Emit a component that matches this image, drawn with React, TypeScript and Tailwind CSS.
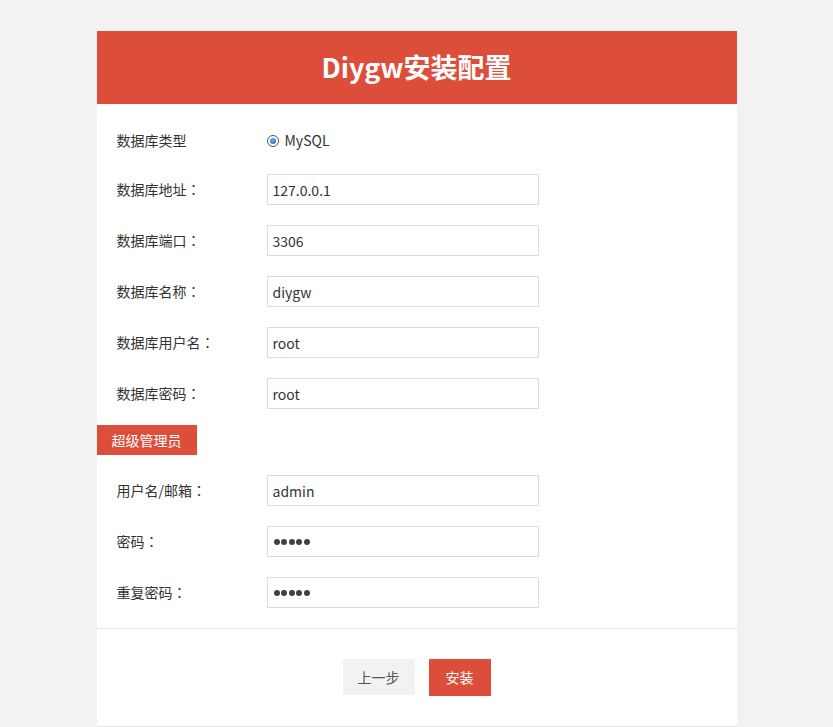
import React from "react";

const font = { fontFamily: '"Noto Sans CJK SC", "Noto Sans", sans-serif' };
const jp = { fontFamily: '"Noto Sans CJK JP", sans-serif' };

function Label({ text }: { text: string }) {
  const hasColon = text.endsWith("：");
  const base = hasColon ? text.slice(0, -1) : text;
  return (
    <div className="w-[150px] text-[14px] text-[#333]">
      {base}
      {hasColon && <span style={jp}>：</span>}
    </div>
  );
}

function Row({ label, value, password = false }: { label: string; value: string; password?: boolean }) {
  return (
    <div className="flex items-center h-[31px] pl-[20px]">
      <Label text={label} />
      {password ? (
        <div className="w-[272px] h-[31px] border border-[#dcdcdc] bg-white pl-[6px] flex items-center gap-[1.6px]">
          {[0, 1, 2, 3, 4].map((i) => (
            <span key={i} className="w-[6px] h-[6px] rounded-full bg-[#404040]" />
          ))}
        </div>
      ) : (
        <input
          type="text"
          readOnly
          defaultValue={value}
          className="w-[272px] h-[31px] border border-[#dcdcdc] bg-white px-[5px] text-[14px] text-[#333] outline-none"
          style={font}
        />
      )}
    </div>
  );
}

export default function App() {
  return (
    <div className="min-h-[727px] bg-[#f2f2f2] pt-[31px]" style={font}>
      <div className="mx-auto w-[640px] bg-white border-b border-[#e6e6e6]">
        <div className="h-[73px] bg-[#dd4e3a] flex items-center justify-center">
          <h1 className="text-white text-[27px] font-bold">Diygw安装配置</h1>
        </div>
        <div className="flex flex-col">
          <div className="flex items-center h-[31px] pl-[20px] mt-[21px] mb-[18px]">
            <Label text="数据库类型" />
            <label className="flex items-center gap-[6px] text-[14px] text-[#333]">
              <span className="w-[12px] h-[12px] rounded-full border border-[#555] bg-white flex items-center justify-center">
                <span className="w-[6px] h-[6px] rounded-full bg-[radial-gradient(circle_at_40%_35%,#6bb6f0,#1d5f9e)]" />
              </span>
              MySQL
            </label>
          </div>
          <div className="flex flex-col gap-[20px]">
            <Row label="数据库地址：" value="127.0.0.1" />
            <Row label="数据库端口：" value="3306" />
            <Row label="数据库名称：" value="diygw" />
            <Row label="数据库用户名：" value="root" />
            <Row label="数据库密码：" value="root" />
          </div>
          <div className="mt-[16px] mb-[20px] w-[100px] h-[30px] bg-[#dd4e3a] text-white text-[14px] flex items-center justify-center">
            超级管理员
          </div>
          <div className="flex flex-col gap-[20px]">
            <Row label="用户名/邮箱：" value="admin" />
            <Row label="密码：" value="admin" password />
            <Row label="重复密码：" value="admin" password />
          </div>
          <div className="mt-[20px] border-t border-[#e6e6e6] pt-[30px] pb-[30px] flex justify-center gap-[14px]">
            <button className="w-[72px] h-[36px] bg-[#f2f2f2] text-[#555] text-[14px]" style={font}>上一步</button>
            <button className="w-[62px] h-[37px] bg-[#dd4e3a] text-white text-[14px]" style={font}>安装</button>
          </div>
        </div>
      </div>
    </div>
  );
}
